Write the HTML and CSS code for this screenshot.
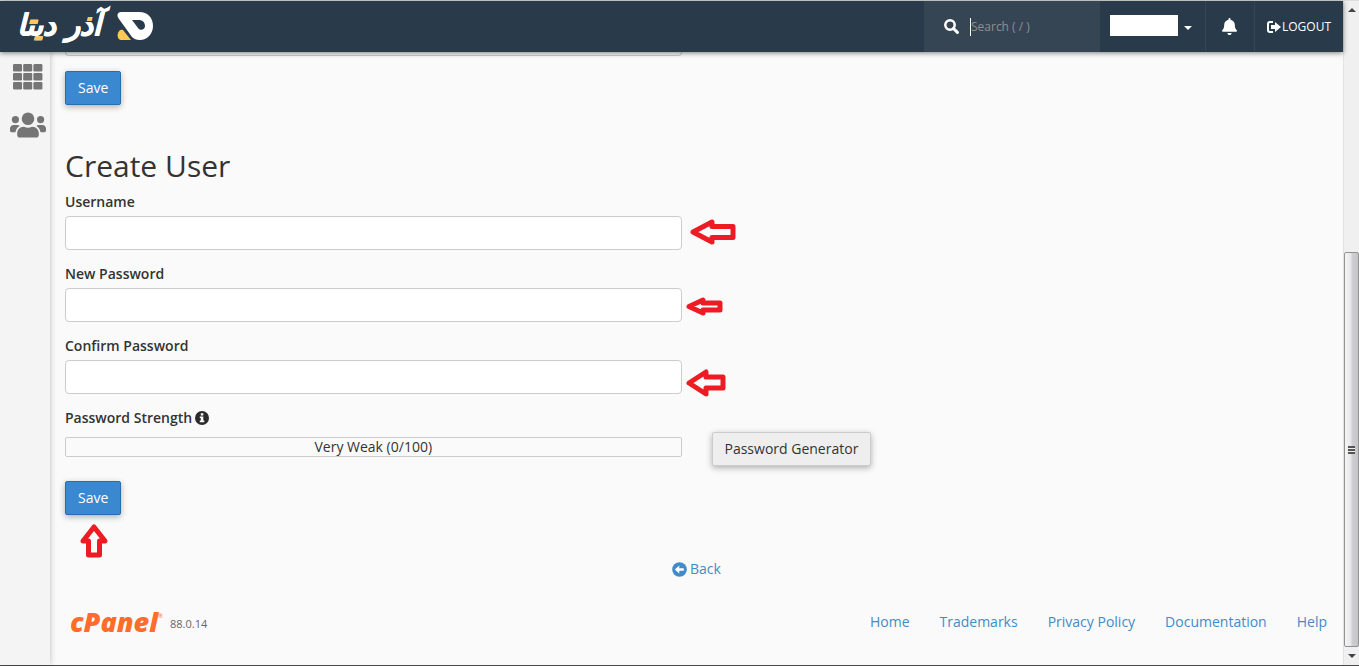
FILE: index.html
```html
<!DOCTYPE html>
<html lang="en">
<head>
<meta charset="utf-8">
<title>Create User</title>
<link rel="stylesheet" href="styles.css">
</head>
<body>
<div class="window">
  <div class="app">
    <header class="topbar">
      <a class="brand" href="#" aria-label="Home page">
        <svg width="136" height="42" viewBox="0 0 136 42">
          <defs>
            <clipPath id="dots">
              <path d="M9 14H19V19.500H9zM13 31.200H24V36H13zM66 11H73V16.500H66z"/>
            </clipPath>
          </defs>
          <text class="brand-text" x="81" y="30">آذر دیتا</text>
          <text class="brand-text brand-accent" x="81" y="30" clip-path="url(#dots)" aria-hidden="true">آذر دیتا</text>
          <path class="brand-mark" fill-rule="evenodd" d="M101 7H119C128 7 133 13 133 21C133 29 127 35 120 35C116 35 114 34 112 32L99 14C96 10 98 7 101 7zM112 15L118 23C120 26 125 25 125 21C125 17 122 15 119 15z"/>
          <path class="brand-accent" d="M103 25L111 35H101C98 35 97 31 98 28C99 25 101 24 103 25z"/>
        </svg>
      </a>
      <div class="tools">
        <label class="search">
          <svg width="15" height="15" viewBox="0 0 15 15"><circle cx="6" cy="6" r="4.7" fill="none" stroke="#fff" stroke-width="2.5"/><path d="M9.5 9.5L13.4 13.4" stroke="#fff" stroke-width="3" stroke-linecap="round"/></svg>
          <input type="search" placeholder="Search ( / )" aria-label="Search">
        </label>
        <button class="tool account" type="button" aria-label="Account menu"><span class="account-name"></span><span class="caret"></span></button>
        <button class="tool bell" type="button" aria-label="Notifications">
          <svg width="15" height="17" viewBox="0 0 448 512"><path fill="#fff" d="M224 512c35 0 64-29 64-64H160c0 35 29 64 64 64zm215-150c-19-20-55-52-55-154 0-78-54-140-128-155V32a32 32 0 1 0-64 0v21C118 68 64 130 64 208c0 102-36 134-55 154-6 6-9 14-9 22 0 16 13 32 32 32h384c19 0 32-16 32-32 0-8-3-16-9-22z"/></svg>
        </button>
        <a class="tool logout" href="#"><svg width="14" height="12" viewBox="0 0 14 12"><path d="M6 1H3Q1 1 1 3V9Q1 11 3 11H6" fill="none" stroke="#fff" stroke-width="2"/><path fill="#fff" d="M4 4H8V1L14 6L8 11V8H4z"/></svg>LOGOUT</a>
      </div>
    </header>
    <div class="body">
      <nav class="sidebar" aria-label="Main">
        <a href="#" aria-label="Tools">
          <svg width="30" height="26" viewBox="0 0 30 26" fill="#757575"><rect x="0" width="9" height="7.5" rx="1.3"/><rect x="10.2" width="9" height="7.5" rx="1.3"/><rect x="20.4" width="9" height="7.5" rx="1.3"/><rect y="9" width="9" height="7.5" rx="1.3"/><rect x="10.2" y="9" width="9" height="7.5" rx="1.3"/><rect x="20.4" y="9" width="9" height="7.5" rx="1.3"/><rect y="18" width="9" height="7.5" rx="1.3"/><rect x="10.2" y="18" width="9" height="7.5" rx="1.3"/><rect x="20.4" y="18" width="9" height="7.5" rx="1.3"/></svg>
        </a>
        <a href="#" aria-label="User manager">
          <svg width="36" height="26" viewBox="0 0 640 462"><path fill="#757575" d="M96 199a64 64 0 1 0 0-128 64 64 0 0 0 0 128zm448 0a64 64 0 1 0 0-128 64 64 0 0 0 0 128zm32 32h-64c-18 0-34 7-45 18 40 22 69 62 75 110h66c18 0 32-14 32-32v-32c0-35-29-64-64-64zm-256 0a112 112 0 1 0 0-224 112 112 0 0 0 0 224zm77 32h-8c-42 20-96 20-138 0h-8c-64 0-115 52-115 115v29c0 27 21 48 48 48h288c27 0 48-21 48-48v-29c0-63-51-115-115-115zm-224-14c-11-11-27-18-45-18H64c-35 0-64 29-64 64v32c0 18 14 32 32 32h66c6-48 35-88 75-110z"/></svg>
        </a>
      </nav>
      <main class="content">
        <section class="columns previous">
          <div class="column">
            <div class="field-end"></div>
            <button class="btn btn-primary" type="button">Save</button>
          </div>
        </section>
        <h2>Create User</h2>
        <form>
          <div class="columns">
            <div class="column">
              <div class="field">
                <label for="username">Username</label>
                <input id="username" type="text">
                <svg class="arrow arrow-username" width="46" height="26" viewBox="0 0 46 26"><path d="M3 13L22 3V7.500H43V18.500H22V23z"/></svg>
              </div>
              <div class="field">
                <label for="password">New Password</label>
                <input id="password" type="password">
                <svg class="arrow arrow-password" width="37" height="19" viewBox="0 0 37 19"><path d="M3 9.500L17 3V6H34V13H17V16z"/></svg>
              </div>
              <div class="field">
                <label for="confirm">Confirm Password</label>
                <input id="confirm" type="password">
                <svg class="arrow arrow-confirm" width="40" height="28" viewBox="0 0 40 28"><path d="M3 14L20 3V8H37V19H20V25z"/></svg>
              </div>
            </div>
          </div>
          <div class="columns strength">
            <div class="column">
              <div class="label" id="strength-label">Password Strength
                <svg width="14" height="14" viewBox="0 0 14 14"><circle cx="7" cy="7" r="7" fill="#2b2b2b"/><path fill="#fff" d="M5.800 2.300H8.300V4.500H5.800zM4.800 5.500H8.300V9.600H9.300V11.200H4.800V9.600H5.800V7.100H4.800z"/></svg>
              </div>
              <div class="meter" role="meter" aria-labelledby="strength-label" aria-valuemin="0" aria-valuemax="100" aria-valuenow="0">Very Weak (0/100)</div>
            </div>
            <div class="column column-end">
              <button class="btn btn-default" type="button">Password Generator</button>
            </div>
          </div>
          <div class="submit">
            <button class="btn btn-primary" type="submit">Save</button>
            <svg class="arrow arrow-save" width="28" height="36" viewBox="0 0 28 36"><path d="M14 4L25 18H19.500V32H8.500V18H3z"/></svg>
          </div>
        </form>
        <a class="back" href="#"><svg width="15" height="15" viewBox="0 0 15 15"><circle cx="7.500" cy="7.500" r="7.300" fill="#428bca"/><path fill="#fff" d="M2.800 7.500L7.300 3.500V6.300H11.800V8.700H7.300V11.500z"/></svg>Back</a>
        <footer class="footer">
          <div class="product">
            <a class="cpanel" href="#">cPanel<span class="registered">®</span></a>
            <span class="version">88.0.14</span>
          </div>
          <nav class="links" aria-label="Footer">
            <a href="#">Home</a>
            <a href="#">Trademarks</a>
            <a href="#">Privacy Policy</a>
            <a href="#">Documentation</a>
            <a href="#">Help</a>
          </nav>
        </footer>
      </main>
    </div>
  </div>
  <div class="scrollbar" aria-hidden="true">
    <span class="scroll-up"></span>
    <div class="track"></div>
    <div class="thumb"><span class="grip"></span></div>
    <span class="scroll-down"></span>
  </div>
</div>
</body>
</html>
```

FILE: styles.css
```css
* { box-sizing: border-box; }

body {
  margin: 0;
  background: #fafafa;
  color: #333;
  font: 14px/20px "Open Sans", "Noto Sans", sans-serif;
}

a { color: #428bca; text-decoration: none; }
button, input { font: inherit; }
svg { display: block; flex: none; }

.window {
  display: flex;
  min-height: 100vh;
  border-top: 1px solid #dedede;
  border-bottom: 1px solid #4a4a4a;
}
.app { flex: 1; display: flex; flex-direction: column; }

.topbar {
  position: relative;
  z-index: 1;
  display: flex;
  justify-content: space-between;
  height: 51px;
  background: #293a4a;
  box-shadow: 0 1px 5px rgba(0, 0, 0, 0.5);
}
.brand { padding: 4px 20px; }
.brand svg { overflow: visible; }
.brand-text {
  font: italic bold 29px "DejaVu Sans", sans-serif;
  fill: #fff;
  stroke: #fff;
  stroke-width: 1px;
  direction: rtl;
}
.brand-mark { fill: #fff; }
.brand-accent { fill: #ffc857; }
.brand-text.brand-accent { stroke: #ffc857; }

.tools { display: flex; color: #fff; font-size: 12px; }
.search {
  display: flex;
  align-items: center;
  gap: 11px;
  width: 175px;
  padding-left: 20px;
  background: #354554;
  font-weight: 400;
}
.search input {
  width: 110px;
  height: 18px;
  padding: 0;
  border: 0;
  border-left: 1px solid #fff;
  outline: 0;
  background: transparent;
  color: #fff;
  appearance: none;
}
.search input::placeholder { color: #8f8f8f; opacity: 1; }
.tool {
  display: flex;
  align-items: center;
  justify-content: center;
  padding: 0 12px;
  border: 0;
  border-left: 1px solid #354656;
  background: transparent;
  color: #fff;
}
.account { gap: 6px; width: 106px; padding: 0 12px 0 10px; justify-content: flex-start; }
.account-name { width: 68px; height: 21px; margin-bottom: 3px; background: #fff; }
.caret { border: 4px solid transparent; border-top-color: #fff; border-bottom: 0; margin-top: 3px; }
.bell { width: 49px; }
.logout { gap: 1px; }

.body { flex: 1; display: flex; }
.sidebar {
  display: flex;
  flex-direction: column;
  align-items: center;
  gap: 22px;
  width: 50px;
  padding: 12px 0 0 5px;
  background: #f4f4f4;
  box-shadow: 0 0 6px rgba(0, 0, 0, 0.25);
}

.content { flex: 1; }
.columns { display: grid; grid-template-columns: 1fr 1fr; }
.column { padding: 0 15px; }
.column-end { align-self: end; }

.field-end {
  height: 4px;
  margin-bottom: 15px;
  border: 1px solid #ccc;
  border-top: 0;
  border-radius: 0 0 4px 4px;
}
h2 { margin: 44px 15px 10px; font-size: 30px; line-height: 33px; font-weight: 400; }

.field { position: relative; margin-bottom: 14px; }
label, .label { font-weight: 600; }
.field label { display: block; margin-bottom: 4px; }
.field input {
  display: block;
  width: 100%;
  height: 34px;
  padding: 6px 12px;
  border: 1px solid #ccc;
  border-radius: 4px;
  background: #fff;
}
.label { display: flex; align-items: center; gap: 3px; margin-bottom: 9px; }
.strength .column:first-child { padding-bottom: 9px; }
.meter {
  height: 20px;
  border: 1px solid #ccc;
  border-radius: 2px;
  line-height: 18px;
  text-align: center;
}

.btn {
  height: 34px;
  padding: 0 12px;
  border: 1px solid;
  border-radius: 2px;
  box-shadow: 0 2px 6px rgba(0, 0, 0, 0.3);
}
.btn-primary { border-color: #2a6cae; background: #3a89d0; color: #fff; display: block; }
.btn-default { border-color: #ccc; background: #eee; color: #333; display: block; }
.submit { position: relative; padding: 15px 15px 0; }

.arrow {
  position: absolute;
  overflow: visible;
  fill: none;
  stroke: #ed1c24;
  stroke-width: 5px;
  stroke-linejoin: round;
}
.arrow-username { left: 100%; top: 27px; margin-left: 8px; }
.arrow-password { left: 100%; top: 33px; margin-left: 4px; }
.arrow-confirm { left: 100%; top: 33px; margin-left: 4px; }
.arrow-save { left: 30px; top: 57px; }

.back {
  display: flex;
  align-items: center;
  justify-content: center;
  gap: 3px;
  margin-top: 44px;
}
.footer {
  display: flex;
  justify-content: space-between;
  align-items: center;
  padding: 26px 16px 22px 20px;
}
.product { display: flex; align-items: center; gap: 7px; }
.cpanel {
  display: flex;
  color: #ff6c2c;
  font-size: 27px;
  line-height: 34px;
  font-weight: 800;
  font-style: italic;
}
.registered { font-size: 6px; line-height: 22px; font-weight: 400; font-style: normal; }
.version { color: #666; font-size: 11px; padding-top: 3px; }
.links { display: flex; gap: 30px; }

.scrollbar {
  display: flex;
  flex-direction: column;
  align-items: center;
  width: 16px;
  background: #f0f0f0;
  border-left: 1px solid #e3e3e3;
}
.scroll-up { border: 4px solid transparent; border-bottom-color: #444; border-top: 0; margin: 7px 0; }
.scroll-down { border: 4px solid transparent; border-top-color: #444; border-bottom: 0; margin: 7px 0; }
.track { flex: 234; }
.thumb {
  flex: 394;
  display: flex;
  align-items: center;
  justify-content: center;
  width: 15px;
  border: 1px solid #929292;
  border-radius: 2px;
  background: linear-gradient(90deg, #f6f6f6, #e6e6e8 45%, #cfcfd3 55%, #c4c4c8);
}
.grip { width: 7px; height: 8px; background: repeating-linear-gradient(#555 0 2px, #eee 2px 3px); }
```
